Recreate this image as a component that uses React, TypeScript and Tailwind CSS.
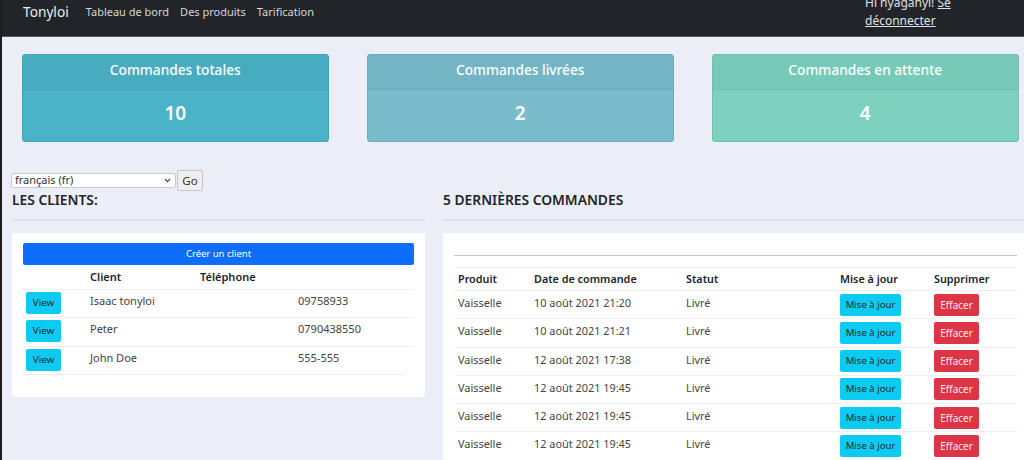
import { ChevronDown } from 'lucide-react';

const font = "[font-family:'Noto_Sans','Open_Sans',sans-serif]";

const clients = [
    { name: 'Isaac tonyloi', phone: '09758933' },
    { name: 'Peter', phone: '0790438550' },
    { name: 'John Doe', phone: '555-555' },
];

const orders = [
    '10 août 2021 21:20',
    '10 août 2021 21:21',
    '12 août 2021 17:38',
    '12 août 2021 19:45',
    '12 août 2021 19:45',
    '12 août 2021 19:45',
];

function StatCard({ title, value, head, body, border }: { title: string; value: string; head: string; body: string; border: string }) {
    return (
        <div className={`w-[306.5px] h-[88px] rounded-[3px] border overflow-hidden text-white text-center ${body} ${border}`}>
            <div className={`h-[35px] border-b text-[13.7px] font-medium leading-[29px] ${head} ${border}`}>{title}</div>
            <div className="text-[19px] font-semibold leading-[47px]">{value}</div>
        </div>
    );
}

export default function App() {
    return (
        <div className={`${font} w-[1024px] h-[460px] overflow-hidden bg-[#ebeef6] border-l-2 border-[#1e1e20] text-[#212529]`}>
            <nav className="h-[37px] bg-[#212529] border-b border-[#55585c] flex items-start overflow-hidden">
                <span className="ml-[21px] mt-[2px] text-[13.7px] leading-[20px] text-[#eceded]">Tonyloi</span>
                <div className="ml-[17px] mt-[3px] flex gap-[11px] text-[11px] leading-[18px] text-[#d5d6d7]">
                    <span>Tableau de bord</span>
                    <span>Des produits</span>
                    <span>Tarification</span>
                </div>
                <div className="ml-auto mr-[69px] -mt-[6px] w-[90px] text-[12px] leading-[18px] text-[#e0e1e2]">
                    Hi nyaganyi! <span className="underline">Se déconnecter</span>
                </div>
            </nav>

            <div className="flex gap-[38.5px] pl-[20px] pt-[17px]">
                <StatCard title="Commandes totales" value="10" head="bg-[#47acc0]" body="bg-[#4bb3c8]" border="border-[#43a3b6]" />
                <StatCard title="Commandes livrées" value="2" head="bg-[#73b5c4]" body="bg-[#7abccb]" border="border-[#6dabb9]" />
                <StatCard title="Commandes en attente" value="4" head="bg-[#76cab7]" body="bg-[#7fd1bf]" border="border-[#70bfad]" />
            </div>

            <div className="flex items-center pl-[9px] mt-[28px] h-[21px]">
                <div className="w-[165px] h-[15px] bg-white border border-[#c9c9cc] rounded-[2px] flex items-center justify-between pl-[3px] pr-[3px] text-[11px] text-[#333]">
                    <span>français (fr)</span>
                    <ChevronDown size={9} strokeWidth={3} />
                </div>
                <div className="ml-[1px] w-[26px] h-[21px] bg-[#efefef] border border-[#c4c4c4] rounded-[2px] text-center text-[11.5px] leading-[19px] text-[#333]">Go</div>
            </div>

            <div className="flex pl-[10px] items-start">
                <section className="w-[413px]">
                    <h2 className="text-[13.8px] font-semibold leading-[17px] h-[30px] border-b-2 border-[#dfe2ea] text-[#212529]">LES CLIENTS:</h2>
                    <div className="mt-[12px] h-[164px] bg-white rounded-[3px] px-[11px] pt-[10px]">
                        <div className="h-[22px] bg-[#0d6efd] rounded-[2px] text-white text-[9.5px] leading-[22px] text-center">Créer un client</div>
                        <div className="grid grid-cols-[67px_110px_1fr] h-[25px] border-b border-[#eeeff1] text-[11px] leading-[24px] font-semibold">
                            <span />
                            <span>Client</span>
                            <span>Téléphone</span>
                        </div>
                        {clients.map((c, i) => (
                            <div key={c.name} className={`grid grid-cols-[67px_208px_1fr] h-[28.3px] border-b border-[#eeeff1] text-[11px] text-[#444] ${i === 2 ? 'mr-[9px]' : ''}`}>
                                <div className="pl-[3px] pt-[2px]">
                                    <div className="w-[35px] h-[22px] bg-[#0dcaf0] rounded-[2px] text-center text-[9.8px] leading-[22px] text-[#1a2a30]">View</div>
                                </div>
                                <span className="leading-[22px]">{c.name}</span>
                                <span className="leading-[22px]">{c.phone}</span>
                            </div>
                        ))}
                    </div>
                </section>

                <section className="ml-[18px] flex-1">
                    <h2 className="text-[13.8px] font-semibold leading-[17px] h-[30px] border-b-2 border-[#dfe2ea] text-[#212529]">5 DERNIÈRES COMMANDES</h2>
                    <div className="mt-[12px] bg-white rounded-l-[3px] pl-[11px] pr-[7px] pt-[22px] h-[240px]">
                        <div className="border-t border-[#c8c9cb] h-[12px]" />
                        <div className="grid grid-cols-[76px_152px_154px_94px_1fr] pl-[4px] h-[24px] border-t border-b border-[#eeeff1] text-[10.8px] leading-[22px] font-semibold">
                            <span>Produit</span>
                            <span>Date de commande</span>
                            <span>Statut</span>
                            <span>Mise à jour</span>
                            <span>Supprimer</span>
                        </div>
                        {orders.map((d, i) => (
                            <div key={i} className="grid grid-cols-[76px_152px_154px_94px_1fr] pl-[4px] h-[28.3px] border-b border-[#eeeff1] text-[10.9px] leading-[24px] text-[#444]">
                                <span>Vaisselle</span>
                                <span>{d}</span>
                                <span>Livré</span>
                                <div className="pt-[2.5px]">
                                    <div className="w-[61px] h-[22px] bg-[#0dcaf0] rounded-[2px] text-center text-[9.6px] leading-[22px] text-[#1a2a30]">Mise à jour</div>
                                </div>
                                <div className="pt-[2.5px]">
                                    <div className="w-[45px] h-[22px] bg-[#dc3545] rounded-[2px] text-center text-[10px] leading-[22px] text-[#fbe9eb]">Effacer</div>
                                </div>
                            </div>
                        ))}
                    </div>
                </section>
            </div>
        </div>
    );
}
